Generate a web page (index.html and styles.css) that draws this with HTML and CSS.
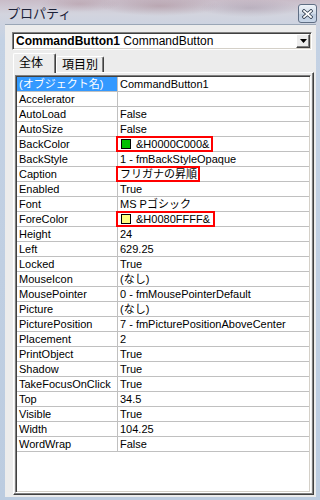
FILE: index.html
```html
<!DOCTYPE html>
<html lang="ja">
<head>
  <meta charset="UTF-8" />
  <title>プロパティ</title>
  <link rel="stylesheet" href="styles.css">
</head>
<body>
  <div class="window">
    <div class="titlebar">
      <span class="title">プロパティ</span>
      <span class="close">
        <svg width="11" height="10" viewBox="0 0 11 10">
          <path d="M2 2 L9 8 M9 2 L2 8" stroke="#2c3a4c" stroke-width="3.4" stroke-linecap="square"/>
          <path d="M2 2 L9 8 M9 2 L2 8" stroke="#fff" stroke-width="1.8" stroke-linecap="square"/>
        </svg>
      </span>
    </div>

    <div class="client">
      <div class="combo">
        <span class="combo-text"><b>CommandButton1</b> CommandButton</span>
        <span class="combo-btn">
          <svg width="7" height="4" viewBox="0 0 7 4"><path d="M0 0 H7 L3.5 4 Z" fill="#000"/></svg>
        </span>
      </div>

      <div class="tabs">
        <div class="tab active">全体</div>
        <div class="tab">項目別</div>
      </div>

      <div class="page">
        <div class="grid">
          <table>
            <tr><td class="name selected">(オブジェクト名)</td><td>CommandButton1</td></tr>
            <tr><td class="name">Accelerator</td><td></td></tr>
            <tr><td class="name">AutoLoad</td><td>False</td></tr>
            <tr><td class="name">AutoSize</td><td>False</td></tr>
            <tr><td class="name">BackColor</td><td class="marked"><span class="swatch green"></span>&amp;H0000C000&amp;<span class="mark mark-back"></span></td></tr>
            <tr><td class="name">BackStyle</td><td>1 - fmBackStyleOpaque</td></tr>
            <tr><td class="name">Caption</td><td class="marked">フリガナの昇順<span class="mark mark-caption"></span></td></tr>
            <tr><td class="name">Enabled</td><td>True</td></tr>
            <tr><td class="name">Font</td><td>MS Pゴシック</td></tr>
            <tr><td class="name">ForeColor</td><td class="marked"><span class="swatch yellow"></span>&amp;H0080FFFF&amp;<span class="mark mark-fore"></span></td></tr>
            <tr><td class="name">Height</td><td>24</td></tr>
            <tr><td class="name">Left</td><td>629.25</td></tr>
            <tr><td class="name">Locked</td><td>True</td></tr>
            <tr><td class="name">MouseIcon</td><td>(なし)</td></tr>
            <tr><td class="name">MousePointer</td><td>0 - fmMousePointerDefault</td></tr>
            <tr><td class="name">Picture</td><td>(なし)</td></tr>
            <tr><td class="name">PicturePosition</td><td>7 - fmPicturePositionAboveCenter</td></tr>
            <tr><td class="name">Placement</td><td>2</td></tr>
            <tr><td class="name">PrintObject</td><td>True</td></tr>
            <tr><td class="name">Shadow</td><td>True</td></tr>
            <tr><td class="name">TakeFocusOnClick</td><td>True</td></tr>
            <tr><td class="name">Top</td><td>34.5</td></tr>
            <tr><td class="name">Visible</td><td>True</td></tr>
            <tr><td class="name">Width</td><td>104.25</td></tr>
            <tr><td class="name">WordWrap</td><td>False</td></tr>
          </table>
        </div>
      </div>
    </div>
  </div>
</body>
</html>
```

FILE: styles.css
```css
body {
  margin: 0;
  width: 320px;
  height: 500px;
  overflow: hidden;
  background: #b9c9de;
  font-family: "Liberation Sans", "Noto Sans CJK JP", sans-serif;
}
.window {
  height: 500px;
  display: flex;
  flex-direction: column;
  background: linear-gradient(180deg, #c9bcc8 0px, #d3d4de 14px, #c4d2e4 40px, #bccce0 100%);
}
.titlebar {
  height: 24px;
  display: flex;
  align-items: flex-start;
  justify-content: space-between;
  padding: 0 3px 0 7px;
  background:
    radial-gradient(ellipse 60px 10px at 160px 6px, rgba(150, 110, 120, 0.35), transparent),
    radial-gradient(ellipse 50px 9px at 250px 8px, rgba(140, 120, 140, 0.3), transparent),
    radial-gradient(ellipse 40px 8px at 80px 4px, rgba(160, 120, 130, 0.3), transparent);
}
.title {
  margin-top: 5px;
  font-family: "Noto Sans CJK JP", sans-serif;
  font-size: 13px;
  line-height: 15px;
  color: #1c2238;
}
.close {
  margin-top: 4px;
  width: 17px;
  height: 17px;
  border: 1px solid #5f6e84;
  border-radius: 3px;
  background: linear-gradient(180deg, #f0f4fa, #d0dbe8 50%, #bccbde 51%, #c8d6e8);
  display: flex;
  align-items: center;
  justify-content: center;
}
.client {
  flex: 1;
  margin: 0 4px 3px 5px;
  background: #ececec;
  border-top: 1px solid #9aa6b6;
  display: flex;
  flex-direction: column;
}
.combo {
  margin: 7px 4px 0 7px;
  height: 18px;
  box-sizing: border-box;
  background: #fff;
  border: 1px solid;
  border-color: #808080 #fff #fff #808080;
  box-shadow: inset 1px 1px #404040, inset -1px -1px #d4d0c8;
  display: flex;
  align-items: center;
  justify-content: space-between;
  padding: 0 1px 0 3px;
}
.combo-text {
  font-size: 12px;
  white-space: nowrap;
}
.combo-btn {
  width: 14px;
  height: 14px;
  box-sizing: border-box;
  background: #ececec;
  border: 1px solid;
  border-color: #fff #404040 #404040 #fff;
  box-shadow: inset -1px -1px #808080;
  display: flex;
  align-items: center;
  justify-content: center;
}
.tabs {
  margin: 3px 0 0 8px;
  height: 19px;
  display: flex;
  align-items: flex-end;
}
.tab {
  height: 16px;
  box-sizing: border-box;
  padding: 0 5px;
  font-family: "Noto Sans CJK JP", sans-serif;
  font-size: 12px;
  line-height: 14px;
  border: 1px solid;
  border-bottom: none;
  border-color: #fff #404040 #fff #fff;
  box-shadow: inset -1px 0 #808080;
  border-radius: 2px 2px 0 0;
}
.tab.active {
  height: 20px;
  margin-bottom: -1px;
  padding: 1px 12px 0 5px;
  background: #ececec;
  position: relative;
}
.page {
  flex: 1;
  margin: 0 2px 2px 8px;
  border: 1px solid;
  border-color: #fff #404040 #404040 #fff;
  box-shadow: inset -1px -1px #808080;
  padding: 2px 2px 1px 1px;
  display: flex;
}
.grid {
  flex: 1;
  background: #fff;
  border: 1px solid;
  border-color: #808080 #fff #fff #808080;
  box-shadow: inset 1px 1px #404040, inset -1px -1px #d4d0c8;
  padding: 1px;
}
table {
  width: 100%;
  border-collapse: collapse;
  table-layout: fixed;
}
td {
  height: 14px;
  padding: 0 0 0 2px;
  border-bottom: 1px solid #c0c0c0;
  font-size: 11px;
  line-height: 14px;
  white-space: nowrap;
  overflow: hidden;
  color: #000;
}
td.name {
  width: 98px;
  border-right: 1px solid #c0c0c0;
}
td.selected {
  background: #3399ff;
  color: #fff;
}
td.marked {
  position: relative;
  overflow: visible;
}
.swatch {
  display: inline-block;
  width: 8px;
  height: 8px;
  border: 1px solid #000;
  margin: 0 5px 0 1px;
  vertical-align: -1px;
}
.green { background: #00c000; }
.yellow { background: #ffff80; }
.mark {
  position: absolute;
  left: -2px;
  top: -1px;
  height: 12px;
  border: 2px solid #ff0000;
}
.mark-back { width: 93px; }
.mark-caption { width: 80px; }
.mark-fore { width: 95px; }
```
